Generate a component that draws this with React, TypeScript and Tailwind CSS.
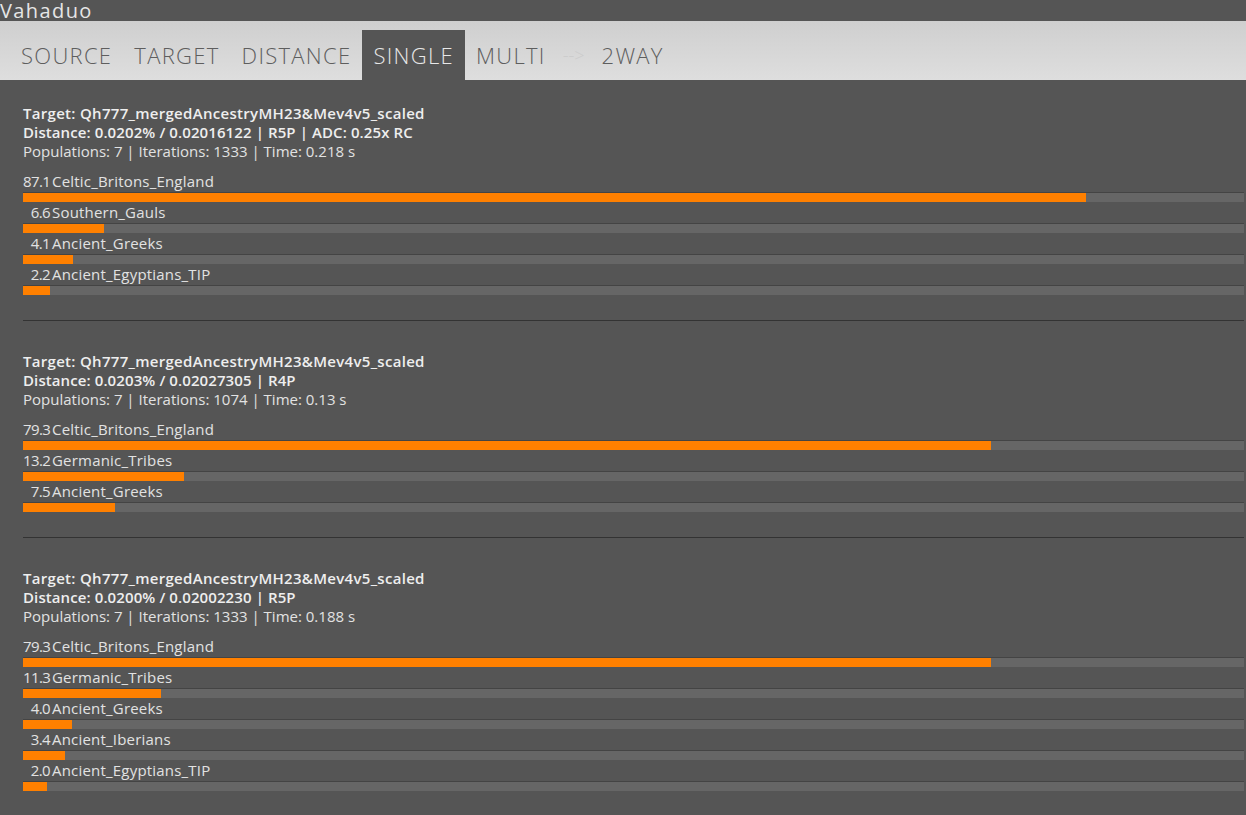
import React from "react"

type Row = { pct: number; name: string }
type Result = { target: string; distance: string; stats: string; rows: Row[] }

const results: Result[] = [
  {
    target: "Target: Qh777_mergedAncestryMH23&Mev4v5_scaled",
    distance: "Distance: 0.0202% / 0.02016122 | R5P | ADC: 0.25x RC",
    stats: "Populations: 7 | Iterations: 1333 | Time: 0.218 s",
    rows: [
      { pct: 87.1, name: "Celtic_Britons_England" },
      { pct: 6.6, name: "Southern_Gauls" },
      { pct: 4.1, name: "Ancient_Greeks" },
      { pct: 2.2, name: "Ancient_Egyptians_TIP" },
    ],
  },
  {
    target: "Target: Qh777_mergedAncestryMH23&Mev4v5_scaled",
    distance: "Distance: 0.0203% / 0.02027305 | R4P",
    stats: "Populations: 7 | Iterations: 1074 | Time: 0.13 s",
    rows: [
      { pct: 79.3, name: "Celtic_Britons_England" },
      { pct: 13.2, name: "Germanic_Tribes" },
      { pct: 7.5, name: "Ancient_Greeks" },
    ],
  },
  {
    target: "Target: Qh777_mergedAncestryMH23&Mev4v5_scaled",
    distance: "Distance: 0.0200% / 0.02002230 | R5P",
    stats: "Populations: 7 | Iterations: 1333 | Time: 0.188 s",
    rows: [
      { pct: 79.3, name: "Celtic_Britons_England" },
      { pct: 11.3, name: "Germanic_Tribes" },
      { pct: 4.0, name: "Ancient_Greeks" },
      { pct: 3.4, name: "Ancient_Iberians" },
      { pct: 2.0, name: "Ancient_Egyptians_TIP" },
    ],
  },
]

const tabs = ["SOURCE", "TARGET", "DISTANCE", "SINGLE", "MULTI"]

function ResultBlock({ r }: { r: Result }) {
  return (
    <div>
      <div className="text-[15px] leading-[19px]">
        <div className="font-semibold tracking-[0.3px] text-[#eeeeee]">{r.target}</div>
        <div className="font-semibold tracking-[0.1px] text-[#eeeeee]">{r.distance}</div>
        <div className="text-[#e2e2e2]">{r.stats}</div>
      </div>
      <div className="mt-[10px]">
        {r.rows.map((row, i) => (
          <div key={i}>
            <div className="flex text-[15px] leading-[21px] text-[#e2e2e2]">
              <span className="w-[27px] text-right tracking-[-0.6px]">{row.pct.toFixed(1)}</span>
              <span className="ml-[2px] tracking-[0.2px]">{row.name}</span>
            </div>
            <div className="h-[10px] border-t border-[#444444] bg-[#666666]">
              <div className="h-full bg-[#ff8000]" style={{ width: `${row.pct}%` }} />
            </div>
          </div>
        ))}
      </div>
    </div>
  )
}

export default function App() {
  return (
    <div className="min-h-[815px] bg-[#555555] font-['Open_Sans',sans-serif]">
      <div className="h-[21px] text-[20px] leading-[21px] tracking-[1.4px] text-[#e6e6e6]">Vahaduo</div>

      <nav className="flex h-[59px] items-end bg-gradient-to-b from-[#cfcfcf] to-[#dedede] pl-[10px]">
        {tabs.map((t) => (
          <div
            key={t}
            className={
              t === "SINGLE"
                ? "flex h-[50px] items-center bg-[#555555] px-[11px] text-[22px] font-light tracking-[1.3px] text-[#e8e8e8]"
                : "flex h-[50px] items-center px-[11px] text-[22px] font-light tracking-[1.3px] text-[#5e5e5e]"
            }
          >
            {t}
          </div>
        ))}
        <div className="flex h-[50px] items-center px-[6px] text-[18px] font-light text-[#cbcbcb]">--&gt;</div>
        <div className="flex h-[50px] items-center px-[11px] text-[22px] font-light tracking-[1.3px] text-[#5e5e5e]">2WAY</div>
      </nav>

      <div className="pl-[23px] pr-[2px] pt-[24px]">
        {results.map((r, i) => (
          <div key={i}>
            <ResultBlock r={r} />
            <div className="mb-[31px] mt-[25px] h-px bg-[#333333]" />
          </div>
        ))}
      </div>
    </div>
  )
}
